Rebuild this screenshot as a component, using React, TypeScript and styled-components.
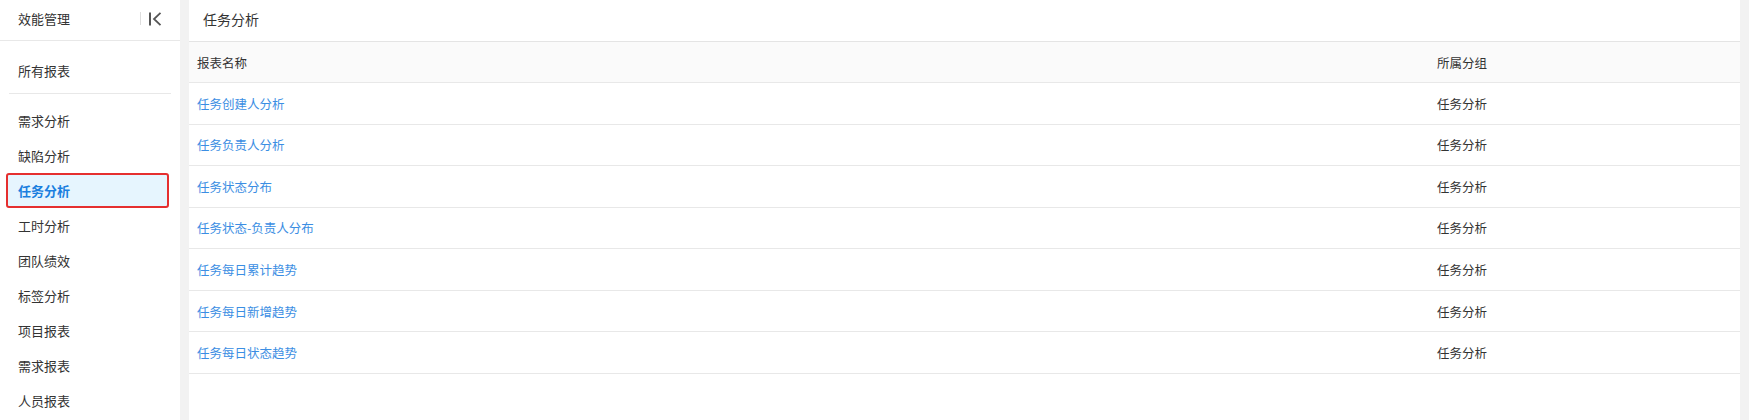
import React from "react";
import styled, { createGlobalStyle } from "styled-components";

const GlobalStyle = createGlobalStyle`
  html, body { margin: 0; padding: 0; background: #f2f2f2; }
  body { font-family: "Noto Sans CJK SC", "Noto Sans", sans-serif; color: #333; }
  * { box-sizing: border-box; }
`;

const Page = styled.div`
  display: flex;
  height: 420px;
  gap: 9px;
  padding-right: 9px;
  overflow: hidden;
`;

const Sidebar = styled.aside`
  width: 180px;
  flex-shrink: 0;
  background: #fff;
  display: flex;
  flex-direction: column;
`;

const SideHeader = styled.div`
  height: 41px;
  border-bottom: 1px solid #e8e8e8;
  display: flex;
  align-items: center;
  padding: 0 18px 3px 18px;
  font-size: 13px;
  color: #333;
`;

const SideTitle = styled.span`
  flex: 1;
`;

const Separator = styled.span`
  width: 1px;
  height: 13px;
  background: #ddd;
  margin-right: 7px;
`;

const CollapseBtn = styled.span`
  display: flex;
  align-items: center;
  width: 14px;
  height: 14px;
`;

const AllReports = styled.div`
  height: 35px;
  margin: 12px 0 5px;
  display: flex;
  align-items: center;
  padding-left: 18px;
  font-size: 13px;
`;

const Divider = styled.div`
  height: 1px;
  background: #e8e8e8;
  margin: 0 9px;
`;

const MenuList = styled.div`
  display: flex;
  flex-direction: column;
  padding-top: 9px;
`;

const MenuItem = styled.div<{ $active?: boolean }>`
  height: 35px;
  margin: 0 11px 0 6px;
  padding: 0 10px;
  display: flex;
  align-items: center;
  font-size: 13px;
  border: 2px solid ${(p) => (p.$active ? "#e52f2f" : "transparent")};
  border-radius: 3px;
  background: ${(p) => (p.$active ? "#e6f5fe" : "transparent")};
  color: ${(p) => (p.$active ? "#1a7fdf" : "#333")};
  font-weight: ${(p) => (p.$active ? 700 : 400)};
`;

const Main = styled.main`
  flex: 1;
  background: #fff;
  display: flex;
  flex-direction: column;
  min-width: 0;
`;

const MainHeader = styled.div`
  height: 42px;
  border-bottom: 1px solid #e4e4e4;
  display: flex;
  align-items: center;
  padding: 0 0 3px 14px;
  font-size: 14px;
  color: #333;
`;

const Row = styled.div<{ $head?: boolean }>`
  display: grid;
  grid-template-columns: 1240px 1fr;
  height: ${(p) => (p.$head ? "41px" : "41.57px")};
  border-bottom: 1px solid #e8e8e8;
  background: ${(p) => (p.$head ? "#fafafa" : "#fff")};
  font-size: 12.5px;
`;

const Cell = styled.div<{ $link?: boolean }>`
  display: flex;
  align-items: center;
  padding-left: 8px;
  color: ${(p) => (p.$link ? "#3b8ee3" : "#333")};
`;

const menu = [
  "需求分析",
  "缺陷分析",
  "任务分析",
  "工时分析",
  "团队绩效",
  "标签分析",
  "项目报表",
  "需求报表",
  "人员报表",
];

const reports = [
  "任务创建人分析",
  "任务负责人分析",
  "任务状态分布",
  "任务状态-负责人分布",
  "任务每日累计趋势",
  "任务每日新增趋势",
  "任务每日状态趋势",
];

export default function App() {
  return (
    <>
      <GlobalStyle />
      <Page>
        <Sidebar>
          <SideHeader>
            <SideTitle>效能管理</SideTitle>
            <Separator />
            <CollapseBtn>
              <svg width="14" height="14" viewBox="0 0 14 14" fill="none">
                <path d="M2 0.5V13.5" stroke="#555" strokeWidth="2" />
                <path d="M12.5 0.8L6 7L12.5 13.2" stroke="#555" strokeWidth="1.8" />
              </svg>
            </CollapseBtn>
          </SideHeader>
          <AllReports>所有报表</AllReports>
          <Divider />
          <MenuList>
            {menu.map((m) => (
              <MenuItem key={m} $active={m === "任务分析"}>
                {m}
              </MenuItem>
            ))}
          </MenuList>
        </Sidebar>
        <Main>
          <MainHeader>任务分析</MainHeader>
          <Row $head>
            <Cell>报表名称</Cell>
            <Cell>所属分组</Cell>
          </Row>
          {reports.map((r) => (
            <Row key={r}>
              <Cell $link>{r}</Cell>
              <Cell>任务分析</Cell>
            </Row>
          ))}
        </Main>
      </Page>
    </>
  );
}
